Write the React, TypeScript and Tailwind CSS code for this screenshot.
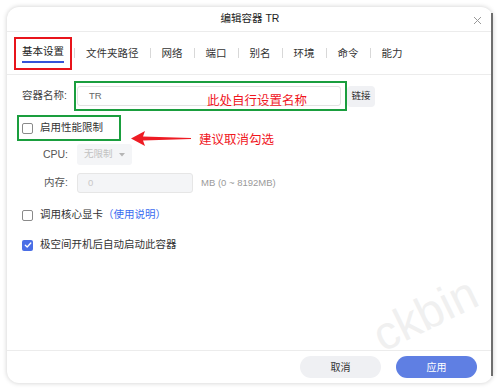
import React from 'react';

const font = { fontFamily: '"Liberation Sans", "Noto Sans CJK SC", sans-serif' };

const tabs = ['文件夹路径', '网络', '端口', '别名', '环境', '命令', '能力'];

function Checkbox({ checked }: { checked?: boolean }) {
  if (checked) {
    return (
      <span className="flex h-[11px] w-[11px] shrink-0 items-center justify-center rounded-[2px] bg-[#4a6ee6]">
        <svg width="8" height="8" viewBox="0 0 8 8" fill="none">
          <path d="M1.3 4.2 3.2 6 6.8 2" stroke="white" strokeWidth="1.3" strokeLinecap="round" strokeLinejoin="round" />
        </svg>
      </span>
    );
  }
  return <span className="h-[11px] w-[11px] shrink-0 rounded-[2px] border border-[#8a8a8a] bg-white" />;
}

export default function App() {
  return (
    <div className="relative h-[389px] w-[500px] overflow-hidden bg-white pl-[7px] pt-[7px] text-[#333]" style={font}>
      <div className="relative flex h-[376px] w-[486px] flex-col rounded-[12px] bg-white shadow-[0_0_5px_rgba(0,0,0,0.2)]">
        {/* header */}
        <div className="relative flex h-[25px] items-center justify-center border-b border-[#ececec] text-[10.5px] text-[#222]">
          编辑容器 TR
          <svg className="absolute right-[11px] top-[9px]" width="9" height="9" viewBox="0 0 9 9">
            <path d="M1 1 8 8M8 1 1 8" stroke="#999" strokeWidth="1" />
          </svg>
        </div>

        {/* tabs */}
        <div className="flex h-[43px] items-center border-b border-[#ececec] pl-[7px] text-[10.5px] text-[#333]">
          <div className="flex h-[33px] flex-col items-center border-2 border-[#e8141b] px-[6px] pt-[5px]">
            <span className="leading-[14px] text-[#222]">基本设置</span>
            <span className="mt-[3px] h-[2px] w-full bg-[#3553d8]" />
          </div>
          <span className="ml-[2px] h-[10px] w-px bg-[#d8d8d8]" />
          {tabs.map((t, i) => (
            <React.Fragment key={t}>
              <span className="ml-[11px] leading-[14px]">{t}</span>
              {i < tabs.length - 1 && <span className="ml-[11px] h-[10px] w-px bg-[#d8d8d8]" />}
            </React.Fragment>
          ))}
        </div>

        {/* body */}
        <div className="relative flex-1 pl-[15px] text-[10.5px]">
          {/* name row */}
          <div className="mt-[6px] flex items-center">
            <span className="w-[52px] text-[#444]">容器名称:</span>
            <div className="relative flex h-[30px] w-[273px] items-center border-2 border-[#1a9e3e] pl-[1px] pr-[4px]">
              <div className="flex h-[20px] flex-1 items-center rounded-[3px] border border-[#e3e3e3] bg-white pl-[11px] text-[9.5px] text-[#666]">
                TR
              </div>
              <span className="absolute left-[131px] top-[10px] text-[12.5px] leading-[17px] text-[#f0161e]">此处自行设置名称</span>
            </div>
            <button className="flex h-[21px] w-[28px] items-center justify-center rounded-[4px] bg-[#f0f1f4] text-[9.5px] text-[#333]">
              链接
            </button>
          </div>

          {/* perf limit */}
          <div className="relative mt-[4px] flex">
            <div className="ml-[-5px] flex h-[26px] items-center gap-[7px] border-2 border-[#1a9e3e] pl-[3px] pr-[16px]">
              <Checkbox />
              <span className="text-[#333]">启用性能限制</span>
            </div>
            <svg className="absolute left-[109px] top-[16px]" width="62" height="16" viewBox="0 0 62 16">
              <polygon points="0,7.5 14,0 12,5.6 60,6.9 60,8.1 12,9.4 14,15" fill="#ee1c24" />
            </svg>
            <span className="absolute left-[177px] top-[17px] text-[12.5px] leading-[17px] text-[#f0161e]">建议取消勾选</span>
          </div>

          {/* cpu */}
          <div className="mt-[3px] flex items-center">
            <span className="w-[46px] text-right text-[#555]">CPU:</span>
            <div className="ml-[9px] flex h-[21px] w-[55px] items-center justify-between rounded-[3px] bg-[#f4f5f7] pl-[7px] pr-[7px] text-[9.5px] text-[#c2c2c2]">
              无限制
              <svg width="6" height="4" viewBox="0 0 6 4">
                <polygon points="0,0 6,0 3,3.5" fill="#b5b5b5" />
              </svg>
            </div>
          </div>

          {/* memory */}
          <div className="mt-[8px] flex items-center">
            <span className="w-[46px] text-right text-[#555]">内存:</span>
            <div className="ml-[9px] flex h-[20px] w-[116px] items-center rounded-[3px] border border-[#e6e6e6] bg-[#f4f5f7] pl-[10px] text-[9.5px] text-[#c8c8c8]">
              0
            </div>
            <span className="ml-[8px] text-[9.5px] text-[#9a9a9a]">MB (0 ~ 8192MB)</span>
          </div>

          {/* gpu */}
          <div className="mt-[12px] flex h-[20px] items-center gap-[7px]">
            <Checkbox />
            <span>
              调用核心显卡<span className="text-[#3a6cf0]">（使用说明）</span>
            </span>
          </div>

          {/* autostart */}
          <div className="mt-[10px] flex h-[20px] items-center gap-[7px]">
            <Checkbox checked />
            <span>极空间开机后自动启动此容器</span>
          </div>
        </div>

        {/* footer */}
        <div className="flex h-[33px] items-center justify-end gap-[15px] border-t border-[#ececec] pr-[16px] text-[10px]">
          <button className="h-[22px] w-[81px] rounded-full bg-[#eff0f3] text-[#333]">取消</button>
          <button className="h-[22px] w-[81px] rounded-full bg-[#5f7fe3] text-white">应用</button>
        </div>

        <span className="absolute bottom-[7px] right-0 top-[6px] w-[2px] bg-[#6e6e6e]" />
      </div>

      <span className="pointer-events-none absolute left-[370px] top-[290px] rotate-[-26deg] text-[47px] leading-none text-[#ececec]/80">
        ckbin
      </span>
    </div>
  );
}
